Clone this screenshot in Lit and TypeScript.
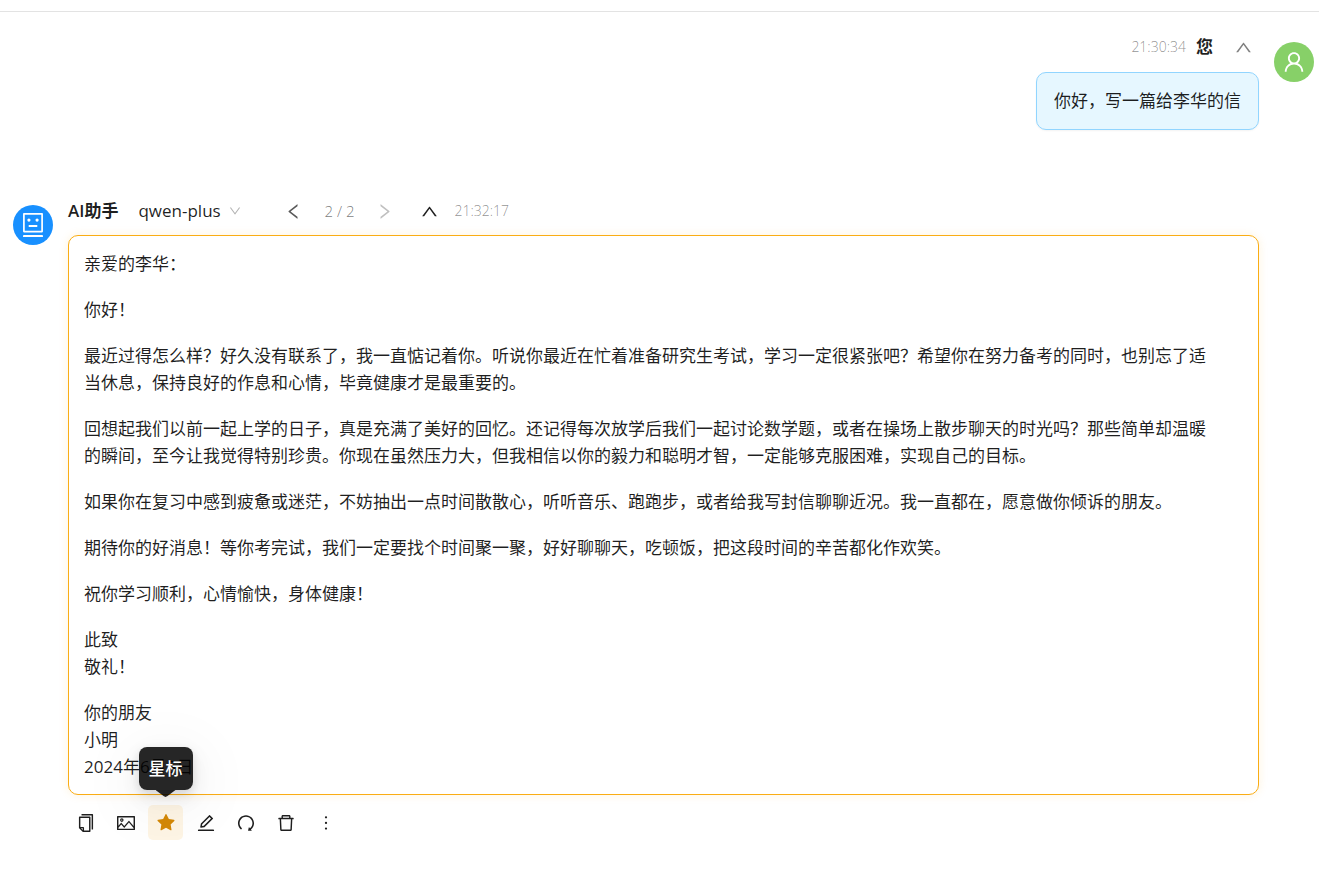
import { LitElement, html, css, svg } from "lit";
import { customElement, property, state } from "lit/decorators.js";

const ICONS: Record<string, string> = {
  user: "M858.5 763.6a374 374 0 00-80.6-119.5 375.63 375.63 0 00-119.5-80.6c-.4-.2-.8-.3-1.2-.5C719.5 518 760 444.7 760 362c0-137-111-248-248-248S264 225 264 362c0 82.7 40.5 156 102.8 201.1-.4.2-.8.3-1.2.5-44.8 18.9-85 46-119.5 80.6a375.63 375.63 0 00-80.6 119.5A371.7 371.7 0 00136 901.8a8 8 0 008 8.2h60c4.4 0 7.9-3.5 8-7.8 2-77.2 33-149.5 87.8-204.3 56.7-56.7 132-87.9 212.2-87.9s155.5 31.2 212.2 87.9C779 752.7 810 825 812 902.2c.1 4.4 3.6 7.8 8 7.8h60a8 8 0 008-8.2c-1-47.8-10.9-94.3-29.5-138.2zM512 534c-45.9 0-89.1-17.9-121.6-50.4S340 407.9 340 362c0-45.9 17.9-89.1 50.4-121.6S466.1 190 512 190s89.1 17.9 121.6 50.4S684 316.1 684 362c0 45.9-17.9 89.1-50.4 121.6S557.9 534 512 534z",
  robot: "M300 328a60 60 0 10120 0 60 60 0 10-120 0zM852 64H172c-17.7 0-32 14.3-32 32v660c0 17.7 14.3 32 32 32h680c17.7 0 32-14.3 32-32V96c0-17.7-14.3-32-32-32zm-32 660H204V128h616v596zM604 328a60 60 0 10120 0 60 60 0 10-120 0zm250.2 556H169.8c-16.5 0-29.8 14.3-29.8 32v36c0 4.4 3.3 8 7.4 8h729.1c4.1 0 7.4-3.6 7.4-8v-36c.1-17.7-13.2-32-29.7-32zM664 508H360c-4.4 0-8 3.6-8 8v60c0 4.4 3.6 8 8 8h304c4.4 0 8-3.6 8-8v-60c0-4.4-3.6-8-8-8z",
  left: "M724 218.3V141c0-6.7-7.7-10.4-12.9-6.3L260.3 486.8a31.86 31.86 0 000 50.3l450.8 352.1c5.3 4.1 12.9.4 12.9-6.3v-77.3c0-4.9-2.3-9.6-6.1-12.6l-360-281 360-281.1c3.8-3 6.1-7.7 6.1-12.6z",
  right: "M765.7 486.8L314.9 134.7A7.97 7.97 0 00302 141v77.3c0 4.9 2.3 9.6 6.1 12.6l360 281.1-360 281.1c-3.9 3-6.1 7.7-6.1 12.6V883c0 6.7 7.7 10.4 12.9 6.3l450.8-352.1a31.96 31.96 0 000-50.4z",
  up: "M890.5 755.3L537.9 269.2c-12.8-17.6-39-17.6-51.7 0L133.5 755.3A8 8 0 00140 768h75c5.1 0 9.9-2.5 12.9-6.6L512 369.8l284.1 391.6c3 4.1 7.8 6.6 12.9 6.6h75c6.5 0 10.3-7.4 6.5-12.7z",
  down: "M884 256h-75c-5.1 0-9.9 2.5-12.9 6.6L512 654.2 227.9 262.6c-3-4.1-7.8-6.6-12.9-6.6h-75c-6.5 0-10.3 7.4-6.5 12.7l352.6 486.1c12.8 17.6 39 17.6 51.7 0l352.6-486.1c3.9-5.3.1-12.7-6.4-12.7z",
  copy: "M832 64H296c-4.4 0-8 3.6-8 8v56c0 4.4 3.6 8 8 8h496v688c0 4.4 3.6 8 8 8h56c4.4 0 8-3.6 8-8V96c0-17.7-14.3-32-32-32zM704 192H192c-17.7 0-32 14.3-32 32v530.7c0 8.5 3.4 16.6 9.4 22.6l173.3 173.3c2.2 2.2 4.7 4 7.4 5.5v1.9h4.2c3.5 1.3 7.2 2 11 2H704c17.7 0 32-14.3 32-32V224c0-17.7-14.3-32-32-32zM350 856.2L263.9 770H350v86.2zM664 888H414V746c0-22.1-17.9-40-40-40H232V264h432v624z",
  picture: "M928 160H96c-17.7 0-32 14.3-32 32v640c0 17.7 14.3 32 32 32h832c17.7 0 32-14.3 32-32V192c0-17.7-14.3-32-32-32zm-40 632H136v-39.9l138.5-164.3 150.1 178L658.1 489 888 761.6V792zm0-129.8L664.2 396.8c-3.2-3.8-9-3.8-12.2 0L424.6 666.4l-144-170.7c-3.2-3.8-9-3.8-12.2 0L136 652.7V232h752v430.2zM304 456a88 88 0 100-176 88 88 0 000 176zm0-116c15.5 0 28 12.5 28 28s-12.5 28-28 28-28-12.5-28-28 12.5-28 28-28z",
  star: "M908.1 353.1l-253.9-36.9L540.7 86.1c-3.1-6.3-8.2-11.4-14.5-14.5-15.8-7.8-35-1.3-42.9 14.5L369.8 316.2l-253.9 36.9c-7 1-13.4 4.3-18.3 9.3a32.05 32.05 0 00.6 45.3l183.7 179.1-43.4 252.9a31.95 31.95 0 0046.4 33.7L512 754l227.1 119.4c6.2 3.3 13.4 4.4 20.3 3.2 17.4-3 29.1-19.5 26.1-36.9l-43.4-252.9 183.7-179.1c5-4.9 8.3-11.3 9.3-18.3 2.7-17.5-9.5-33.7-27-36.3z",
  edit: "M257.7 752c2 0 4-.2 6-.5L431.9 722c2-.4 3.9-1.3 5.3-2.8l423.9-423.9a9.96 9.96 0 000-14.1L694.9 114.9c-1.9-1.9-4.4-2.9-7.1-2.9s-5.2 1-7.1 2.9L256.8 538.8c-1.5 1.5-2.4 3.3-2.8 5.3l-29.5 168.2a33.5 33.5 0 009.4 29.8c6.6 6.4 14.9 9.9 23.8 9.9zm67.4-174.4L687.8 215l73.3 73.3-362.7 362.6-88.9 15.7 15.6-89zM880 836H144c-17.7 0-32 14.3-32 32v36c0 4.4 3.6 8 8 8h784c4.4 0 8-3.6 8-8v-36c0-17.7-14.3-32-32-32z",
  redo: "M758.2 839.1C851.8 765.9 912 651.9 912 523.9 912 303 733.5 124.3 512.6 124 291.4 123.7 112 302.8 112 523.9c0 125.2 57.5 236.9 147.6 310.2 3.5 2.8 8.6 2.2 11.4-1.3l39.4-50.5c2.7-3.4 2.1-8.3-1.2-11.1-8.1-6.6-15.9-13.7-23.4-21.2a318.64 318.64 0 01-68.6-101.7C200.4 609 192 567.1 192 523.9s8.4-85.1 25.1-124.5c16.1-38.1 39.2-72.3 68.6-101.7 29.4-29.4 63.6-52.5 101.7-68.6C426.9 212.4 468.8 204 512 204s85.1 8.4 124.5 25.1c38.1 16.1 72.3 39.2 101.7 68.6 29.4 29.4 52.5 63.6 68.6 101.7 16.7 39.4 25.1 81.3 25.1 124.5s-8.4 85.1-25.1 124.5a318.64 318.64 0 01-68.6 101.7c-9.3 9.3-19.1 18-29.3 26L668.2 724a8 8 0 00-14.1 3l-39.6 162.2c-1.2 5 2.6 9.9 7.7 9.9l167 .8c6.7 0 10.5-7.7 6.3-12.9l-37.3-47.9z",
  trash: "M360 184h-8c4.4 0 8-3.6 8-8v8h304v-8c0 4.4 3.6 8 8 8h-8v72h72v-80c0-35.3-28.7-64-64-64H352c-35.3 0-64 28.7-64 64v80h72v-72zm504 72H160c-17.7 0-32 14.3-32 32v32c0 4.4 3.6 8 8 8h60.4l24.7 523c1.6 34.1 29.8 61 63.9 61h454c34.2 0 62.3-26.8 63.9-61l24.7-523H888c4.4 0 8-3.6 8-8v-32c0-17.7-14.3-32-32-32zM731.3 840H292.7l-24.2-512h487l-24.2 512z",
  more: "M456 231a56 56 0 10112 0 56 56 0 10-112 0zm0 280a56 56 0 10112 0 56 56 0 10-112 0zm0 280a56 56 0 10112 0 56 56 0 10-112 0z",
};

const LETTER: string[][] = [
  ["亲爱的李华："],
  ["你好！"],
  ["最近过得怎么样？好久没有联系了，我一直惦记着你。听说你最近在忙着准备研究生考试，学习一定很紧张吧？希望你在努力备考的同时，也别忘了适当休息，保持良好的作息和心情，毕竟健康才是最重要的。"],
  ["回想起我们以前一起上学的日子，真是充满了美好的回忆。还记得每次放学后我们一起讨论数学题，或者在操场上散步聊天的时光吗？那些简单却温暖的瞬间，至今让我觉得特别珍贵。你现在虽然压力大，但我相信以你的毅力和聪明才智，一定能够克服困难，实现自己的目标。"],
  ["如果你在复习中感到疲惫或迷茫，不妨抽出一点时间散散心，听听音乐、跑跑步，或者给我写封信聊聊近况。我一直都在，愿意做你倾诉的朋友。"],
  ["期待你的好消息！等你考完试，我们一定要找个时间聚一聚，好好聊聊天，吃顿饭，把这段时间的辛苦都化作欢笑。"],
  ["祝你学习顺利，心情愉快，身体健康！"],
  ["此致", "敬礼！"],
  ["你的朋友", "小明", "2024年6月5日"],
];

const ACTIONS = [
  { icon: "copy", label: "复制" },
  { icon: "picture", label: "图片" },
  { icon: "star", label: "星标" },
  { icon: "edit", label: "编辑" },
  { icon: "redo", label: "重新生成" },
  { icon: "trash", label: "删除" },
  { icon: "more", label: "更多" },
];

@customElement("ui-icon")
export class UiIcon extends LitElement {
  @property() name = "";
  static styles = css`
    :host { display: inline-flex; width: 18px; height: 18px; }
    .glyph { width: 100%; height: 100%; fill: currentColor; }
  `;
  render() {
    return html`<svg class="glyph" viewBox="64 64 896 896" aria-hidden="true">${svg`<path d=${ICONS[this.name]}></path>`}</svg>`;
  }
}

@customElement("app-root")
export class AppRoot extends LitElement {
  @state() private starred = true;

  static styles = css`
    :host {
      display: block;
      padding-top: 11px;
      background: #fff;
      color: rgba(0, 0, 0, 0.88);
      font: 17px/26px "Open Sans", "Noto Sans CJK SC", sans-serif;
    }
    * { box-sizing: border-box; }
    button, select { font: inherit; color: inherit; border: 0; background: none; padding: 0; margin: 0; }
    button { display: inline-flex; align-items: center; justify-content: center; cursor: pointer; }
    .chat { border-top: 1px solid #e3e3e3; padding: 22px 5px 0 13px; }
    .row { display: flex; gap: 15px; }
    .row.mine { justify-content: flex-end; }
    .row.ai { margin-top: 64px; padding-right: 55px; }
    .avatar {
      flex: none; display: flex; align-items: center; justify-content: center;
      width: 40px; height: 40px; margin-top: 8px; border-radius: 50%; color: #fff;
    }
    .avatar ui-icon { width: 22px; height: 22px; }
    .avatar.user { background: #87d068; }
    .avatar.bot { background: #1890ff; margin-top: 11px; }
    .avatar.bot ui-icon { width: 24px; height: 24px; }
    .stack { display: flex; flex-direction: column; align-items: flex-end; }
    .head { display: flex; align-items: center; height: 26px; }
    .name { font-size: 17px; font-weight: 600; }
    .time { font-size: 14px; line-height: 22px; font-weight: 300; color: rgba(0, 0, 0, 0.45); }
    .mine .name { margin: 0 22px 0 10px; }
    .mine .fold { margin-right: 7px; color: rgba(0, 0, 0, 0.5); }
    .fold ui-icon { width: 17px; height: 17px; }
    .bubble {
      margin: 12px 0 0; padding: 15px 17px; border: 1px solid #91d5ff; border-radius: 10px;
      background: #e6f7ff; box-shadow: 0 1px 2px rgba(0, 0, 0, 0.05);
    }
    .body { flex: 1; min-width: 0; }
    .ai .head { margin-top: 4px; }
    .model { display: flex; align-items: center; margin-left: 20px; }
    .model select { appearance: none; height: 26px; padding-right: 20px; }
    .model ui-icon { width: 12px; height: 12px; margin-left: -12px; color: rgba(0, 0, 0, 0.3); pointer-events: none; }
    .pager { display: flex; align-items: center; margin-left: 44px; font-size: 15px; color: rgba(0, 0, 0, 0.55); font-weight: 300; }
    .count { margin: 0 22px; }
    .prev { color: rgba(0, 0, 0, 0.65); }
    .next { color: rgba(0, 0, 0, 0.25); }
    .pager ui-icon { width: 17px; height: 17px; }
    .ai .fold { margin: 0 16px 0 28px; }
    .card {
      margin-top: 11px; padding: 14px 48px 14px 15px; border: 1px solid #faad14; border-radius: 10px;
      background: #fff; line-height: 27px; box-shadow: 0 0 10px rgba(250, 173, 20, 0.14);
    }
    .card p { margin: 0 0 19px; }
    .card p:last-child { margin: 0; }
    .tools { display: flex; gap: 5px; margin-top: 10px; }
    .slot { position: relative; }
    .tool { width: 35px; height: 35px; border-radius: 5px; }
    .tool.on { background: #fef5e5; color: #d48806; }
    .tip {
      position: absolute; z-index: 2; left: 50%; bottom: 50px; transform: translateX(-50%);
      padding: 8px 10px; border-radius: 8px; white-space: nowrap; line-height: 27px; font-weight: 500;
      background: rgba(0, 0, 0, 0.85); color: #fff;
      box-shadow: 0 8px 20px rgba(0, 0, 0, 0.08), 0 3px 8px rgba(0, 0, 0, 0.1), 0 12px 60px 10px rgba(0, 0, 0, 0.05);
    }
    .tip::after {
      content: ""; position: absolute; left: 50%; top: 100%; width: 20px; height: 7px; margin-left: -10px;
      background: rgba(0, 0, 0, 0.85); clip-path: polygon(0 0, 100% 0, 60% 86%, 50% 100%, 40% 86%);
    }
  `;

  render() {
    return html`
      <main class="chat">
        <section class="row mine">
          <div class="stack">
            <header class="head">
              <time class="time">21:30:34</time>
              <span class="name">您</span>
              <button class="fold" aria-label="收起"><ui-icon name="up"></ui-icon></button>
            </header>
            <p class="bubble">你好，写一篇给李华的信</p>
          </div>
          <div class="avatar user"><ui-icon name="user"></ui-icon></div>
        </section>

        <section class="row ai">
          <div class="avatar bot"><ui-icon name="robot"></ui-icon></div>
          <div class="body">
            <header class="head">
              <span class="name">AI助手</span>
              <div class="model">
                <select aria-label="模型"><option>qwen-plus</option></select>
                <ui-icon name="down"></ui-icon>
              </div>
              <nav class="pager">
                <button class="prev" aria-label="上一条"><ui-icon name="left"></ui-icon></button>
                <span class="count">2 / 2</span>
                <button class="next" aria-label="下一条" disabled><ui-icon name="right"></ui-icon></button>
              </nav>
              <button class="fold" aria-label="收起"><ui-icon name="up"></ui-icon></button>
              <time class="time">21:32:17</time>
            </header>
            <article class="card">
              ${LETTER.map((lines) => html`<p>${lines.map((line, i) => (i ? html`<br />${line}` : line))}</p>`)}
            </article>
            <div class="tools">
              ${ACTIONS.map(
                (a) => html`<div class="slot">
                  <button
                    class="tool ${a.icon === "star" && this.starred ? "on" : ""}"
                    aria-label=${a.label}
                    @click=${() => { if (a.icon === "star") this.starred = !this.starred; }}
                  ><ui-icon name=${a.icon}></ui-icon></button>
                  ${a.icon === "star" ? html`<div class="tip" role="tooltip">${a.label}</div>` : null}
                </div>`
              )}
            </div>
          </div>
        </section>
      </main>
    `;
  }
}
